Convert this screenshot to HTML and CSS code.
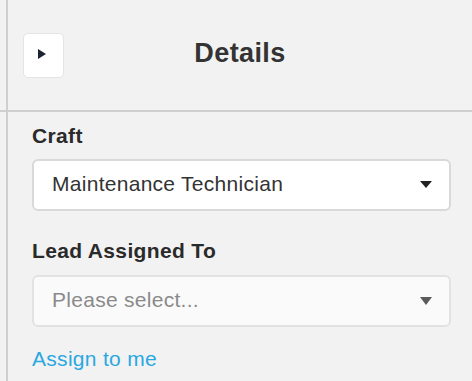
FILE: index.html
```html
<!DOCTYPE html>
<html>
<head>
<meta charset="utf-8">
<link rel="stylesheet" href="styles.css">
</head>
<body>
<div class="header">
  <div class="gutter"></div>
  <div class="header-inner">
    <button class="toggle" aria-label="Expand"><span class="tri-right"></span></button>
    <h1 class="title">Details</h1>
    <div></div>
  </div>
</div>
<div class="main">
  <div class="gutter"></div>
  <div class="content">
    <div class="field">
      <label class="label">Craft</label>
      <div class="select">
        <span class="value">Maintenance Technician</span>
        <span class="caret"></span>
      </div>
    </div>
    <div class="field field-2">
      <label class="label">Lead Assigned To</label>
      <div class="select select-empty">
        <span class="value placeholder">Please select...</span>
        <span class="caret caret-muted"></span>
      </div>
    </div>
    <a class="link" href="#">Assign to me</a>
  </div>
</div>
</body>
</html>
```

FILE: styles.css
```css
html, body {
  margin: 0;
  padding: 0;
  background: #f2f2f2;
  font-family: "Liberation Sans", Arial, sans-serif;
  color: #333;
  height: 100%;
}

.header {
  display: flex;
  height: 110px;
  border-bottom: 2px solid #cfcfcf;
}

.gutter {
  width: 6px;
  flex: none;
}

.header-inner {
  flex: 1;
  border-left: 2px solid #cfcfcf;
  display: grid;
  grid-template-columns: 1fr auto 1fr;
  align-items: center;
  padding: 0 15px;
}

.toggle {
  width: 41px;
  height: 45px;
  margin-top: 1px;
  background: #fff;
  border: 1px solid #e4e4e4;
  border-radius: 5px;
  padding: 0;
  display: flex;
  align-items: center;
  justify-content: center;
  justify-self: start;
}

.tri-right {
  width: 0;
  height: 0;
  border-top: 5px solid transparent;
  border-bottom: 5px solid transparent;
  border-left: 8px solid #1c2433;
  margin: 0 3px 4px 0;
}

.title {
  margin: 0 0 4px 0;
  font-size: 27px;
  font-weight: bold;
  letter-spacing: 0.4px;
  color: #333;
}

.main {
  display: flex;
  min-height: calc(100% - 112px);
}

.content {
  flex: 1;
  border-left: 2px solid #cfcfcf;
  padding: 12px 21px 0 24px;
}

.field {
  display: flex;
  flex-direction: column;
}

.field-2 {
  margin-top: 28px;
}

.label {
  font-size: 21px;
  font-weight: bold;
  line-height: 24px;
  letter-spacing: 0.35px;
  color: #2a2a2a;
}

.select {
  margin-top: 11px;
  height: 52px;
  box-sizing: border-box;
  background: #fff;
  border: 2px solid #d9d9d9;
  border-radius: 6px;
  display: flex;
  align-items: center;
  justify-content: space-between;
  padding: 0 17px 3px 18px;
  font-size: 21px;
  letter-spacing: 0.28px;
}

.field-2 .select {
  margin-top: 12px;
}

.select-empty {
  background: #fafafa;
  border-color: #e2e2e2;
}

.value {
  color: #333;
}

.placeholder {
  color: #8a8a8a;
}

.caret {
  width: 0;
  height: 0;
  border-left: 6px solid transparent;
  border-right: 6px solid transparent;
  border-top: 7px solid #222;
  margin-top: 2px;
}

.caret-muted {
  border-top-color: #5a5a5a;
  border-top-width: 8px;
}

.link {
  display: inline-block;
  margin-top: 20px;
  font-size: 21px;
  line-height: 24px;
  letter-spacing: 0.3px;
  color: #2aa8e0;
  text-decoration: none;
}
```
